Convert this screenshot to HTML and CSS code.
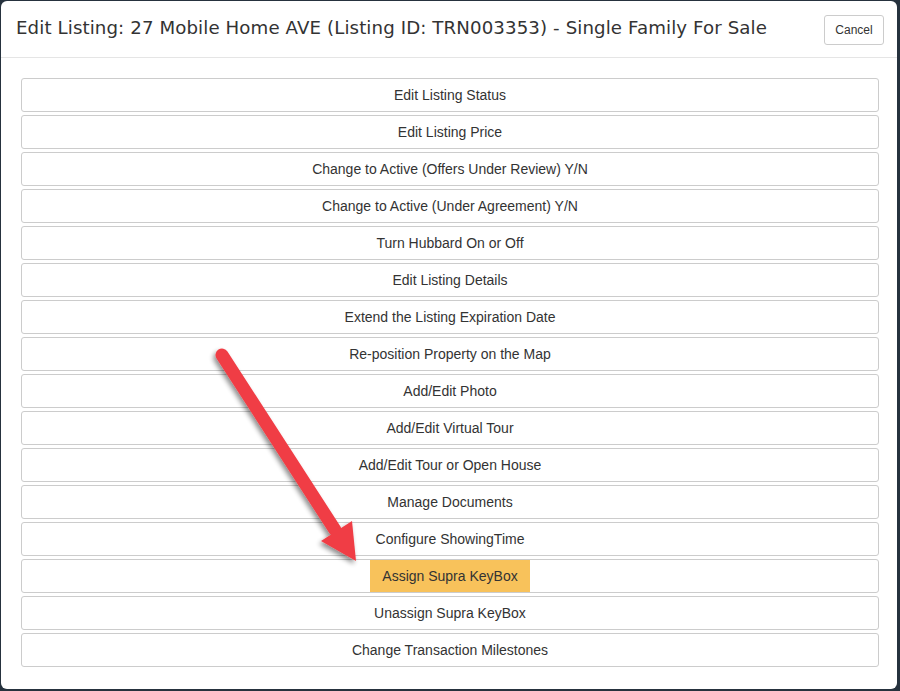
FILE: index.html
```html
<!DOCTYPE html>
<html>
<head>
<meta charset="utf-8">
<link rel="stylesheet" href="styles.css">
</head>
<body>
<div class="modal">
  <div class="modal-header">
    <h4 class="title">Edit Listing: 27 Mobile Home AVE (Listing ID: TRN003353) - Single Family For Sale</h4>
    <button class="cancel">Cancel</button>
  </div>
  <div class="modal-body">
    <button class="opt">Edit Listing Status</button>
    <button class="opt">Edit Listing Price</button>
    <button class="opt">Change to Active (Offers Under Review) Y/N</button>
    <button class="opt">Change to Active (Under Agreement) Y/N</button>
    <button class="opt">Turn Hubbard On or Off</button>
    <button class="opt">Edit Listing Details</button>
    <button class="opt">Extend the Listing Expiration Date</button>
    <button class="opt">Re-position Property on the Map</button>
    <button class="opt">Add/Edit Photo</button>
    <button class="opt">Add/Edit Virtual Tour</button>
    <button class="opt">Add/Edit Tour or Open House</button>
    <button class="opt">Manage Documents</button>
    <button class="opt">Configure ShowingTime</button>
    <button class="opt hl"><span class="mark">Assign Supra KeyBox</span></button>
    <button class="opt">Unassign Supra KeyBox</button>
    <button class="opt">Change Transaction Milestones</button>
  </div>
  <svg class="arrow" width="900" height="691" viewBox="0 0 900 691">
    <defs>
      <filter id="sh" x="-20%" y="-20%" width="140%" height="140%">
        <feGaussianBlur in="SourceAlpha" stdDeviation="2.5"/>
        <feOffset dx="-2" dy="3" result="b"/>
        <feComponentTransfer><feFuncA type="linear" slope="0.45"/></feComponentTransfer>
        <feMerge><feMergeNode/><feMergeNode in="SourceGraphic"/></feMerge>
      </filter>
    </defs>
    <g filter="url(#sh)" fill="#f03e45">
      <line x1="222" y1="355" x2="335" y2="530" stroke="#f03e45" stroke-width="13" stroke-linecap="round"/>
      <polygon points="321,541 352,521 356,561"/>
    </g>
  </svg>
</div>
</body>
</html>
```
FILE: styles.css
```css
html, body {
  margin: 0;
  padding: 0;
}
body {
  width: 900px;
  height: 691px;
  background: #26323e;
  overflow: hidden;
  padding: 1px 0 0 1px;
  box-sizing: border-box;
}
.modal {
  position: relative;
  width: 896px;
  height: 688px;
  background: #fff;
  border-radius: 6px;
  display: flex;
  flex-direction: column;
}
.modal-header {
  height: 56px;
  border-bottom: 1px solid #e5e5e5;
  display: flex;
  align-items: center;
  justify-content: space-between;
  padding: 0 13px 0 15px;
}
.title {
  margin: -3px 0 0 0;
  font-family: "DejaVu Sans", Verdana, sans-serif;
  font-weight: normal;
  font-size: 18.2px;
  color: #333;
  letter-spacing: 0.1px;
}
.cancel {
  font-family: "Liberation Sans", Arial, sans-serif;
  font-size: 12px;
  color: #333;
  background: #fff;
  border: 1px solid #ccc;
  border-radius: 3px;
  width: 60px;
  height: 30px;
  padding: 0;
  margin-top: 2px;
}
.modal-body {
  padding: 20px 18px 0 20px;
  display: flex;
  flex-direction: column;
  gap: 3px;
}
.opt {
  height: 34px;
  width: 100%;
  background: #fff;
  border: 1px solid #ccc;
  border-radius: 3px;
  font-family: "Liberation Sans", Arial, sans-serif;
  font-size: 14px;
  color: #333;
  padding: 0;
  display: flex;
  align-items: center;
  justify-content: center;
}
.mark {
  background: #f8c25b;
  height: 32px;
  padding: 0 12px;
  display: flex;
  align-items: center;
}
.arrow {
  position: absolute;
  left: -1px;
  top: -1px;
  pointer-events: none;
}
```
